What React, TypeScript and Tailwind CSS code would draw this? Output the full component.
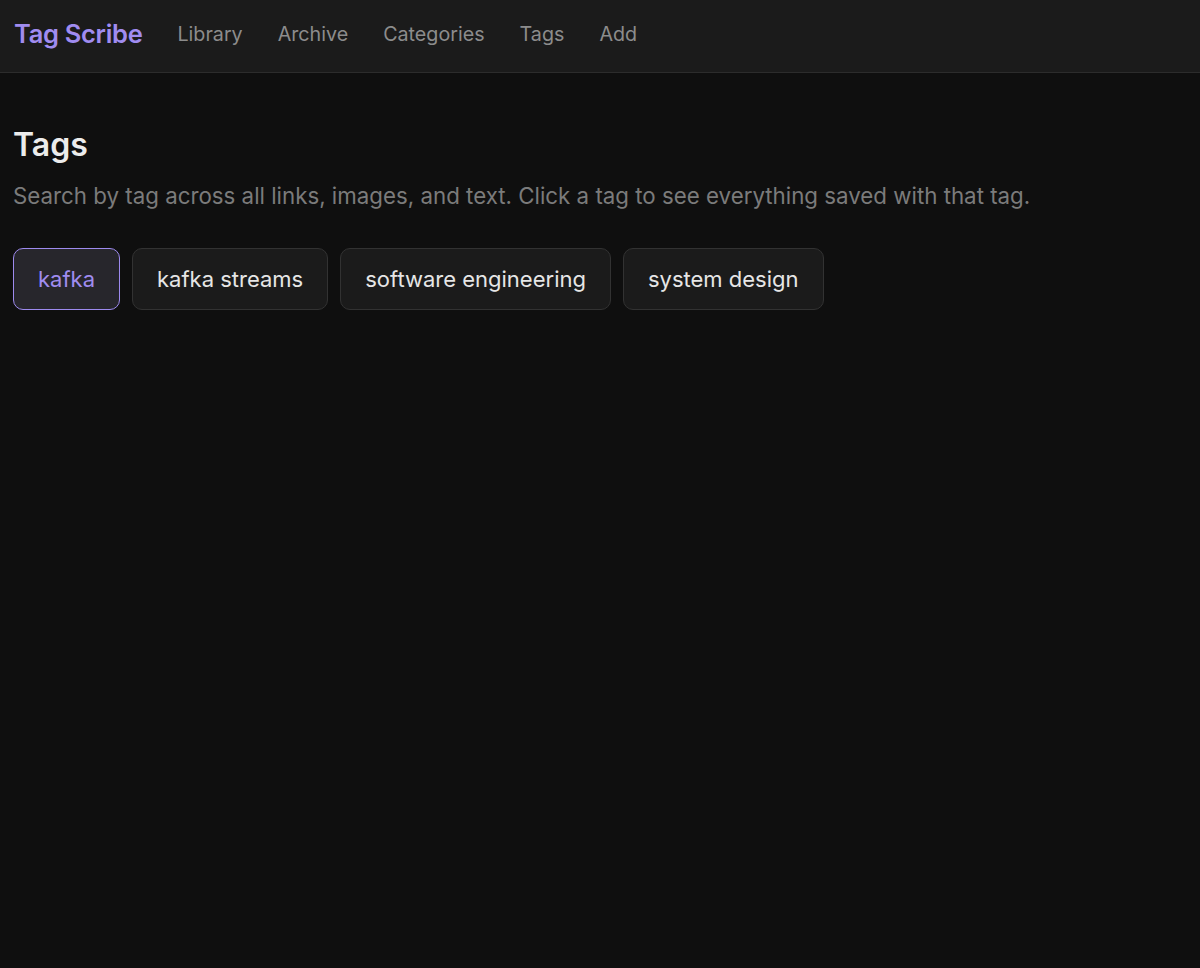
const navItems = ['Library', 'Archive', 'Categories', 'Tags', 'Add'];
const tags = ['kafka', 'kafka streams', 'software engineering', 'system design'];

export default function App() {
  const active = 'kafka';
  return (
    <div className="min-h-[968px] bg-[#0f0f0f] font-['Inter','Noto_Sans',sans-serif]">
      <header className="flex h-[73px] items-center gap-[35px] border-b border-[#2c2c2c] bg-[#1b1b1b] px-[14px] pb-[3px]">
        <span className="text-[25.5px] font-semibold tracking-[-0.3px] text-[#a08cf0]">Tag Scribe</span>
        {navItems.map(item => (
          <a key={item} className="text-[19.7px] text-[#8c8c8c]">
            {item}
          </a>
        ))}
      </header>
      <main className="px-[13px] pt-[50px]">
        <h1 className="text-[32px] font-semibold leading-[44px] text-[#ececec]">Tags</h1>
        <p className="mt-[14px] text-[22.3px] leading-[30px] text-[#7b7b7b]">
          Search by tag across all links, images, and text. Click a tag to see everything saved with that tag.
        </p>
        <div className="mt-[37px] flex flex-wrap gap-3">
          {tags.map(tag => (
            <button
              key={tag}
              className={`h-[62px] rounded-[10px] border px-6 text-[22px] ${
                tag === active
                  ? 'border-[#9d8aee] bg-[#27262c] text-[#a08cf0]'
                  : 'border-[#323232] bg-[#1b1b1b] text-[#e6e6e6]'
              }`}
            >
              {tag}
            </button>
          ))}
        </div>
      </main>
    </div>
  );
}
